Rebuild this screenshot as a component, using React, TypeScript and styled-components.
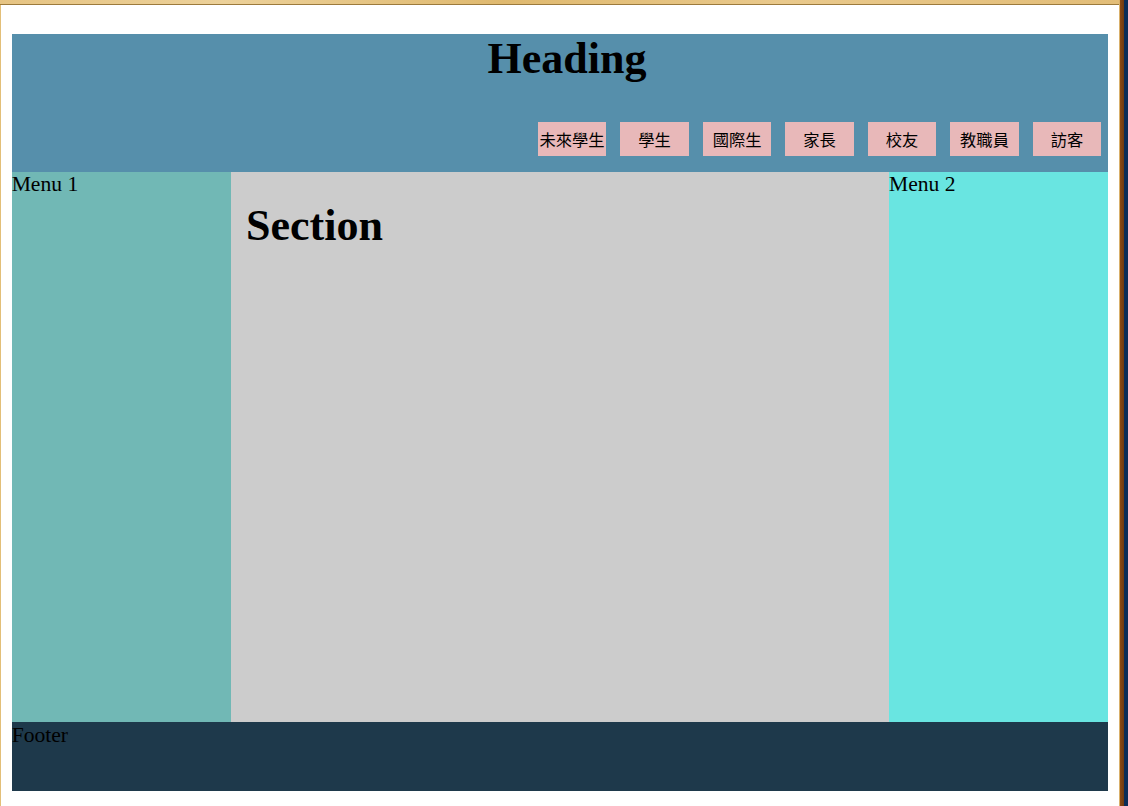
import styled, { createGlobalStyle } from "styled-components";

const GlobalStyle = createGlobalStyle`
  html, body {
    margin: 0;
    padding: 0;
    background: #ffffff;
  }
`;

const Window = styled.div`
  width: 1128px;
  height: 806px;
  display: flex;
  overflow: hidden;
`;

const Column = styled.div`
  flex: 1;
  display: flex;
  flex-direction: column;
`;

const TopBar = styled.div`
  height: 4px;
  border-bottom: 1px solid #9c7a3c;
  background: linear-gradient(
    to right,
    #e6c483,
    #ecd19a 20%,
    #dfb96f 45%,
    #e9c98c 70%,
    #e2bd78
  );
`;

const Body = styled.div`
  flex: 1;
  display: flex;
`;

const LeftEdge = styled.div`
  width: 1px;
  background: #e3bf78;
`;

const RightEdge = styled.div`
  width: 9px;
  background: linear-gradient(
    to right,
    #d9b06a 0,
    #d9b06a 1px,
    #8a4a12 1px,
    #6e3a10 5px,
    #0b2d57 5px,
    #0b2d57 100%
  );
`;

const Page = styled.div`
  flex: 1;
  padding: 29px 10.67px 0;
  font-family: "Liberation Serif", "Noto Sans CJK TC", serif;
  font-size: 21.6px;
  color: #000;
`;

const Header = styled.header`
  background: #568fab;
  padding: 0 7px 16px;
`;

const Title = styled.h1`
  margin: 0;
  padding-left: 14px;
  text-align: center;
  font-size: 44px;
  line-height: 49px;
  font-weight: bold;
`;

const Nav = styled.nav`
  display: flex;
  justify-content: flex-end;
  gap: 13.8px;
  margin-top: 39px;
`;

const NavButton = styled.div`
  width: 68.7px;
  height: 34px;
  background: #e8b8b9;
  display: flex;
  align-items: center;
  justify-content: center;
  font-family: "Noto Sans CJK TC", "Noto Sans", sans-serif;
  font-size: 16.3px;
  white-space: nowrap;
`;

const Main = styled.div`
  display: grid;
  grid-template-columns: 20% 60% 20%;
  height: 550px;
`;

const Side = styled.aside<{ $bg: string }>`
  background: ${(props) => props.$bg};
  line-height: 24.5px;
`;

const Section = styled.section`
  background: #cccccc;
  padding: 0 15px;
`;

const SectionTitle = styled.h1`
  margin: 28.6px 0 0;
  font-size: 44px;
  line-height: 49px;
  font-weight: bold;
`;

const Footer = styled.footer`
  background: #1e394b;
  height: 69px;
  line-height: 26px;
`;

const links = ["未來學生", "學生", "國際生", "家長", "校友", "教職員", "訪客"];

export default function App() {
  return (
    <>
      <GlobalStyle />
      <Window>
        <Column>
          <TopBar />
          <Body>
            <LeftEdge />
            <Page>
              <Header>
                <Title>Heading</Title>
                <Nav>
                  {links.map((link) => (
                    <NavButton key={link}>{link}</NavButton>
                  ))}
                </Nav>
              </Header>
              <Main>
                <Side $bg="#71b8b5">Menu 1</Side>
                <Section>
                  <SectionTitle>Section</SectionTitle>
                </Section>
                <Side $bg="#69e5e1">Menu 2</Side>
              </Main>
              <Footer>Footer</Footer>
            </Page>
          </Body>
        </Column>
        <RightEdge />
      </Window>
    </>
  );
}
